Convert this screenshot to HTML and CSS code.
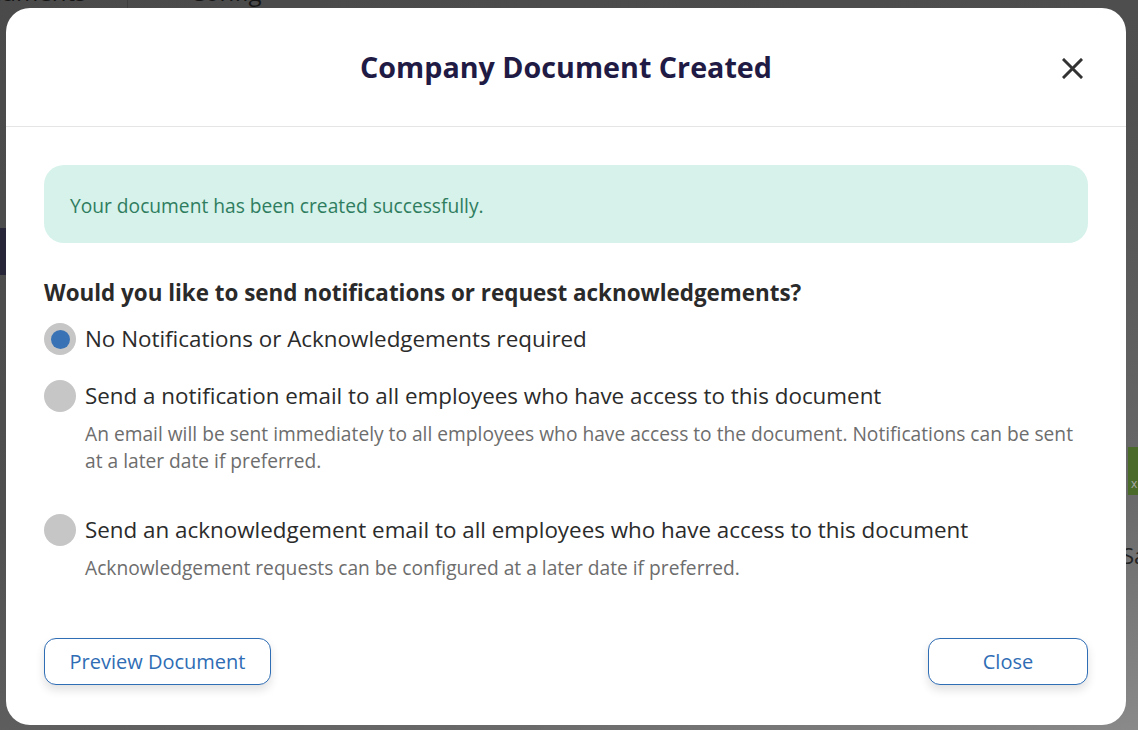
FILE: index.html
```html
<!DOCTYPE html>
<html>
<head>
<meta charset="utf-8">
<link rel="stylesheet" href="styles.css">
</head>
<body>
<div class="page">
  <div class="tabs">
    <div class="tab tab-docs">Documents</div>
    <div class="tab tab-config">Config</div>
  </div>
  <div class="navbar"></div>
  <div class="side-green">x</div>
  <div class="side-text">Sa</div>
</div>
<div class="overlay">
  <div class="modal">
    <div class="modal-header">
      <h1 class="title">Company Document Created</h1>
      <button class="close-x" aria-label="Close">
        <svg width="21" height="21" viewBox="0 0 21 21"><path d="M2 2 L19 19 M19 2 L2 19" stroke="#333" stroke-width="3" stroke-linecap="square" fill="none"/></svg>
      </button>
    </div>
    <div class="modal-body">
      <div class="alert">Your document has been created successfully.</div>
      <div class="question">Would you like to send notifications or request acknowledgements?</div>
      <div class="option opt-first">
        <span class="radio checked"></span>
        <span class="label">No Notifications or Acknowledgements required</span>
      </div>
      <div class="option">
        <span class="radio"></span>
        <span class="label">Send a notification email to all employees who have access to this document</span>
        <span class="desc">An email will be sent immediately to all employees who have access to the document. Notifications can be sent at a later date if preferred.</span>
      </div>
      <div class="option opt-last">
        <span class="radio"></span>
        <span class="label">Send an acknowledgement email to all employees who have access to this document</span>
        <span class="desc">Acknowledgement requests can be configured at a later date if preferred.</span>
      </div>
      <div class="actions">
        <button class="btn btn-preview">Preview Document</button>
        <button class="btn btn-close">Close</button>
      </div>
    </div>
  </div>
</div>
</body>
</html>
```
FILE: styles.css
```css
* { box-sizing: border-box; }
html, body { margin: 0; padding: 0; }
body {
  width: 1138px;
  height: 730px;
  overflow: hidden;
  font-family: "Open Sans", "Noto Sans", sans-serif;
  background: linear-gradient(160deg, #4a4a4a 0%, #4f4f4f 45%, #6a6a6a 80%, #8a8a8a 100%);
  position: relative;
}
.page { position: relative; width: 1138px; height: 730px; display: flow-root; }
.tabs {
  display: flex;
  height: 60px;
  margin-top: -32px;
}
.tab {
  font-size: 24px;
  color: #151515;
  line-height: 48px;
  padding: 0 30px;
}
.tab-docs { width: 128px; text-indent: -72px; overflow: hidden; white-space: nowrap; border-right: 1px solid #3e3e3e; }
.tab-config { padding-left: 62px; }
.navbar {
  position: absolute;
  left: 0; top: 228px;
  width: 20px; height: 47px;
  background: #262638;
}
.side-green {
  position: absolute;
  left: 1128px; top: 447px;
  width: 20px; height: 48px;
  background: #4a6a2a;
  color: #aaa;
  font-size: 12px;
  padding: 28px 0 0 3px;
}
.side-text {
  position: absolute;
  left: 1122px; top: 540px;
  font-size: 22px;
  color: #222;
}
.overlay {
  position: absolute;
  inset: 0;
  padding: 8px 12px 5px 6px;
}
.modal {
  width: 1120px;
  height: 717px;
  background: #fff;
  border-radius: 24px;
  display: flex;
  flex-direction: column;
  overflow: hidden;
}
.modal-header {
  height: 119px;
  border-bottom: 1px solid #e5e5e5;
  display: flex;
  align-items: center;
  justify-content: center;
  position: relative;
}
.title {
  margin: 0 0 2px 0;
  font-size: 28.7px;
  font-weight: 700;
  color: #1f1b45;
}
.close-x {
  position: absolute;
  right: 43px;
  top: 50px;
  width: 21px;
  height: 21px;
  padding: 0;
  border: 0;
  background: none;
  display: flex;
}
.modal-body {
  padding: 38px 38px 0 38px;
  display: flex;
  flex-direction: column;
}
.alert {
  height: 78px;
  background: #d6f2ea;
  border-radius: 20px;
  padding-left: 26px;
  padding-top: 2px;
  display: flex;
  align-items: center;
  font-size: 19.2px;
  color: #2f7d5f;
}
.question {
  margin-top: 35px;
  font-size: 22.4px;
  line-height: 30px;
  font-weight: 700;
  color: #2a2a2a;
}
.option {
  display: grid;
  grid-template-columns: 32px 1fr;
  column-gap: 9px;
  margin-top: 25px;
}
.opt-first { margin-top: 15px; }
.opt-last { margin-top: 40px; }
.radio {
  width: 32px;
  height: 32px;
  border-radius: 50%;
  background: #c6c6c6;
  display: flex;
  align-items: center;
  justify-content: center;
}
.radio.checked::after {
  content: "";
  width: 19px;
  height: 19px;
  border-radius: 50%;
  background: #3a73b5;
}
.label {
  font-size: 22.4px;
  line-height: 32px;
  color: #2b2b2b;
}
.desc {
  grid-column: 2;
  margin-top: 8px;
  font-size: 19.2px;
  line-height: 27px;
  color: #6d6d6d;
}
.actions {
  display: flex;
  justify-content: space-between;
  margin-top: 57px;
}
.btn {
  height: 47px;
  border: 1px solid #2f6db5;
  border-radius: 12px;
  background: #fff;
  color: #2f6db5;
  font-family: "Open Sans", "Noto Sans", sans-serif;
  font-size: 20px;
  box-shadow: 0 5px 10px rgba(0,0,0,0.12);
  padding: 0 0 0 0;
}
.btn-preview { width: 227px; }
.btn-close { width: 160px; }
```
